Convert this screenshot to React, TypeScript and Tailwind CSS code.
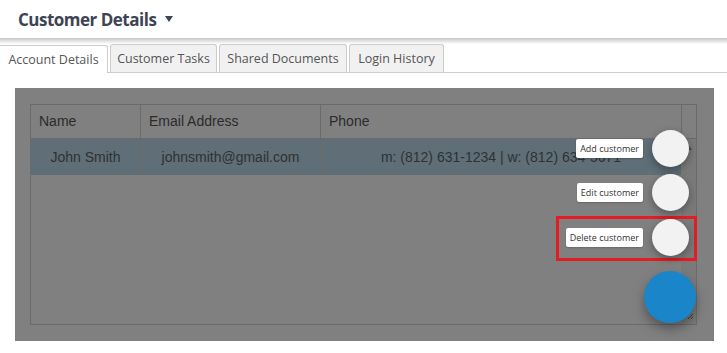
import React from "react";

export default function App() {
  const tabs = [
    { t: "Account Details", w: "w-[108px]" },
    { t: "Customer Tasks", w: "w-[107px]" },
    { t: "Shared Documents", w: "w-[128px]" },
    { t: "Login History", w: "w-[95px]" },
  ];
  const label =
    "absolute right-[84px] h-[19px] px-[4px] flex items-center bg-white rounded-[2px] text-[9px] text-[#333333] shadow-[0_1px_2px_rgba(0,0,0,0.2)] whitespace-nowrap";
  const circle =
    "absolute left-[652px] w-[37px] h-[37px] rounded-full bg-[#f2f2f2] shadow-[0_3px_8px_rgba(0,0,0,0.35)]";
  return (
    <div className="relative w-[727px] h-[353px] bg-white overflow-hidden" style={{ fontFamily: "'Open Sans', 'Noto Sans', sans-serif" }}>
      {/* Header */}
      <div className="h-[38px] flex items-center pl-[18px] gap-[9px]">
        <span className="text-[17px] font-bold text-[#3d4454] tracking-[-0.5px] leading-none">Customer Details</span>
        <svg width="8" height="6" viewBox="0 0 8 6">
          <polygon points="0,0 8,0 4,6" fill="#3d4454" />
        </svg>
      </div>
      <div className="h-[6px] bg-gradient-to-b from-[#c6c6c6] to-white" />
      {/* Tabs */}
      <div className="flex items-end gap-[2px] border-b border-[#cccccc] h-[29px]">
        {tabs.map((tab, i) => (
          <div
            key={tab.t}
            className={
              i === 0
                ? `${tab.w} h-[28px] pt-[2px] flex items-center justify-center bg-white border-t border-r border-[#cccccc] rounded-tr-[3px] mb-[-1px] text-[12.5px] text-[#555555] whitespace-nowrap`
                : `${tab.w} h-[28px] pt-[2px] flex items-center justify-center bg-[#f1f1f1] border border-b-0 border-[#cccccc] rounded-t-[3px] text-[12.5px] text-[#555555] whitespace-nowrap`
            }
          >
            {tab.t}
          </div>
        ))}
      </div>
      {/* Content panel */}
      <div className="ml-[15px] mt-[15px] w-[699px] h-[253px] bg-[#808080] pt-[16px] pl-[15px]">
        <div className="w-[667px] h-[221px] border border-[#6b6b6b] flex flex-col" style={{ fontFamily: "'Liberation Sans', Arial, sans-serif" }}>
          <div className="flex h-[34px] border-b border-[#6b6b6b] text-[14px] text-[#2b2b2b]">
            <div className="w-[110px] border-r border-[#6b6b6b] flex items-center pl-[8px]">Name</div>
            <div className="w-[180px] border-r border-[#6b6b6b] flex items-center pl-[8px]">Email Address</div>
            <div className="w-[361px] border-r border-[#6b6b6b] flex items-center pl-[8px]">Phone</div>
            <div className="flex-1" />
          </div>
          <div className="flex flex-1">
            <div className="w-[650px] flex flex-col">
              <div className="flex h-[36px] bg-[#5f6e77] text-[14px] text-[#2d3236]">
                <div className="w-[110px] border-r border-[#6b6b6b] flex items-center justify-center">John Smith</div>
                <div className="w-[180px] border-r border-[#6b6b6b] flex items-center justify-center">johnsmith@gmail.com</div>
                <div className="flex-1 flex items-center justify-center">m: (812) 631-1234 | w: (812) 634-5671</div>
              </div>
            </div>
            <div className="flex-1 bg-[#7a7a7a] flex flex-col items-center pt-[6px]">
              <svg width="7" height="5" viewBox="0 0 7 5"><polygon points="0,5 7,5 3.5,0" fill="#4a4a4a" /></svg>
            </div>
          </div>
        </div>
      </div>

      {/* Speed dial overlay */}
      <div className="absolute left-[556px] top-[216px] w-[141px] h-[45px] border-[3px] border-[#e51c23]" />

      <div className={`${label} top-[139px]`}>Add customer</div>
      <div className={`${circle} top-[130px]`} />

      <div className={`${label} top-[183px]`}>Edit customer</div>
      <div className={`${circle} top-[174px]`} />

      <div className={`${label} top-[228px]`}>Delete customer</div>
      <div className={`${circle} top-[219px]`} />

      <svg className="absolute left-[687px] top-[313px]" width="7" height="7" viewBox="0 0 7 7">
        <line x1="1" y1="6" x2="6" y2="1" stroke="#444" strokeWidth="1" />
        <line x1="4" y1="6" x2="6" y2="4" stroke="#444" strokeWidth="1" />
      </svg>
      <div className="absolute left-[644px] top-[271px] w-[52px] h-[52px] rounded-full bg-[#1b85c9] shadow-[0_6px_12px_rgba(0,0,0,0.35)]" />
    </div>
  );
}
